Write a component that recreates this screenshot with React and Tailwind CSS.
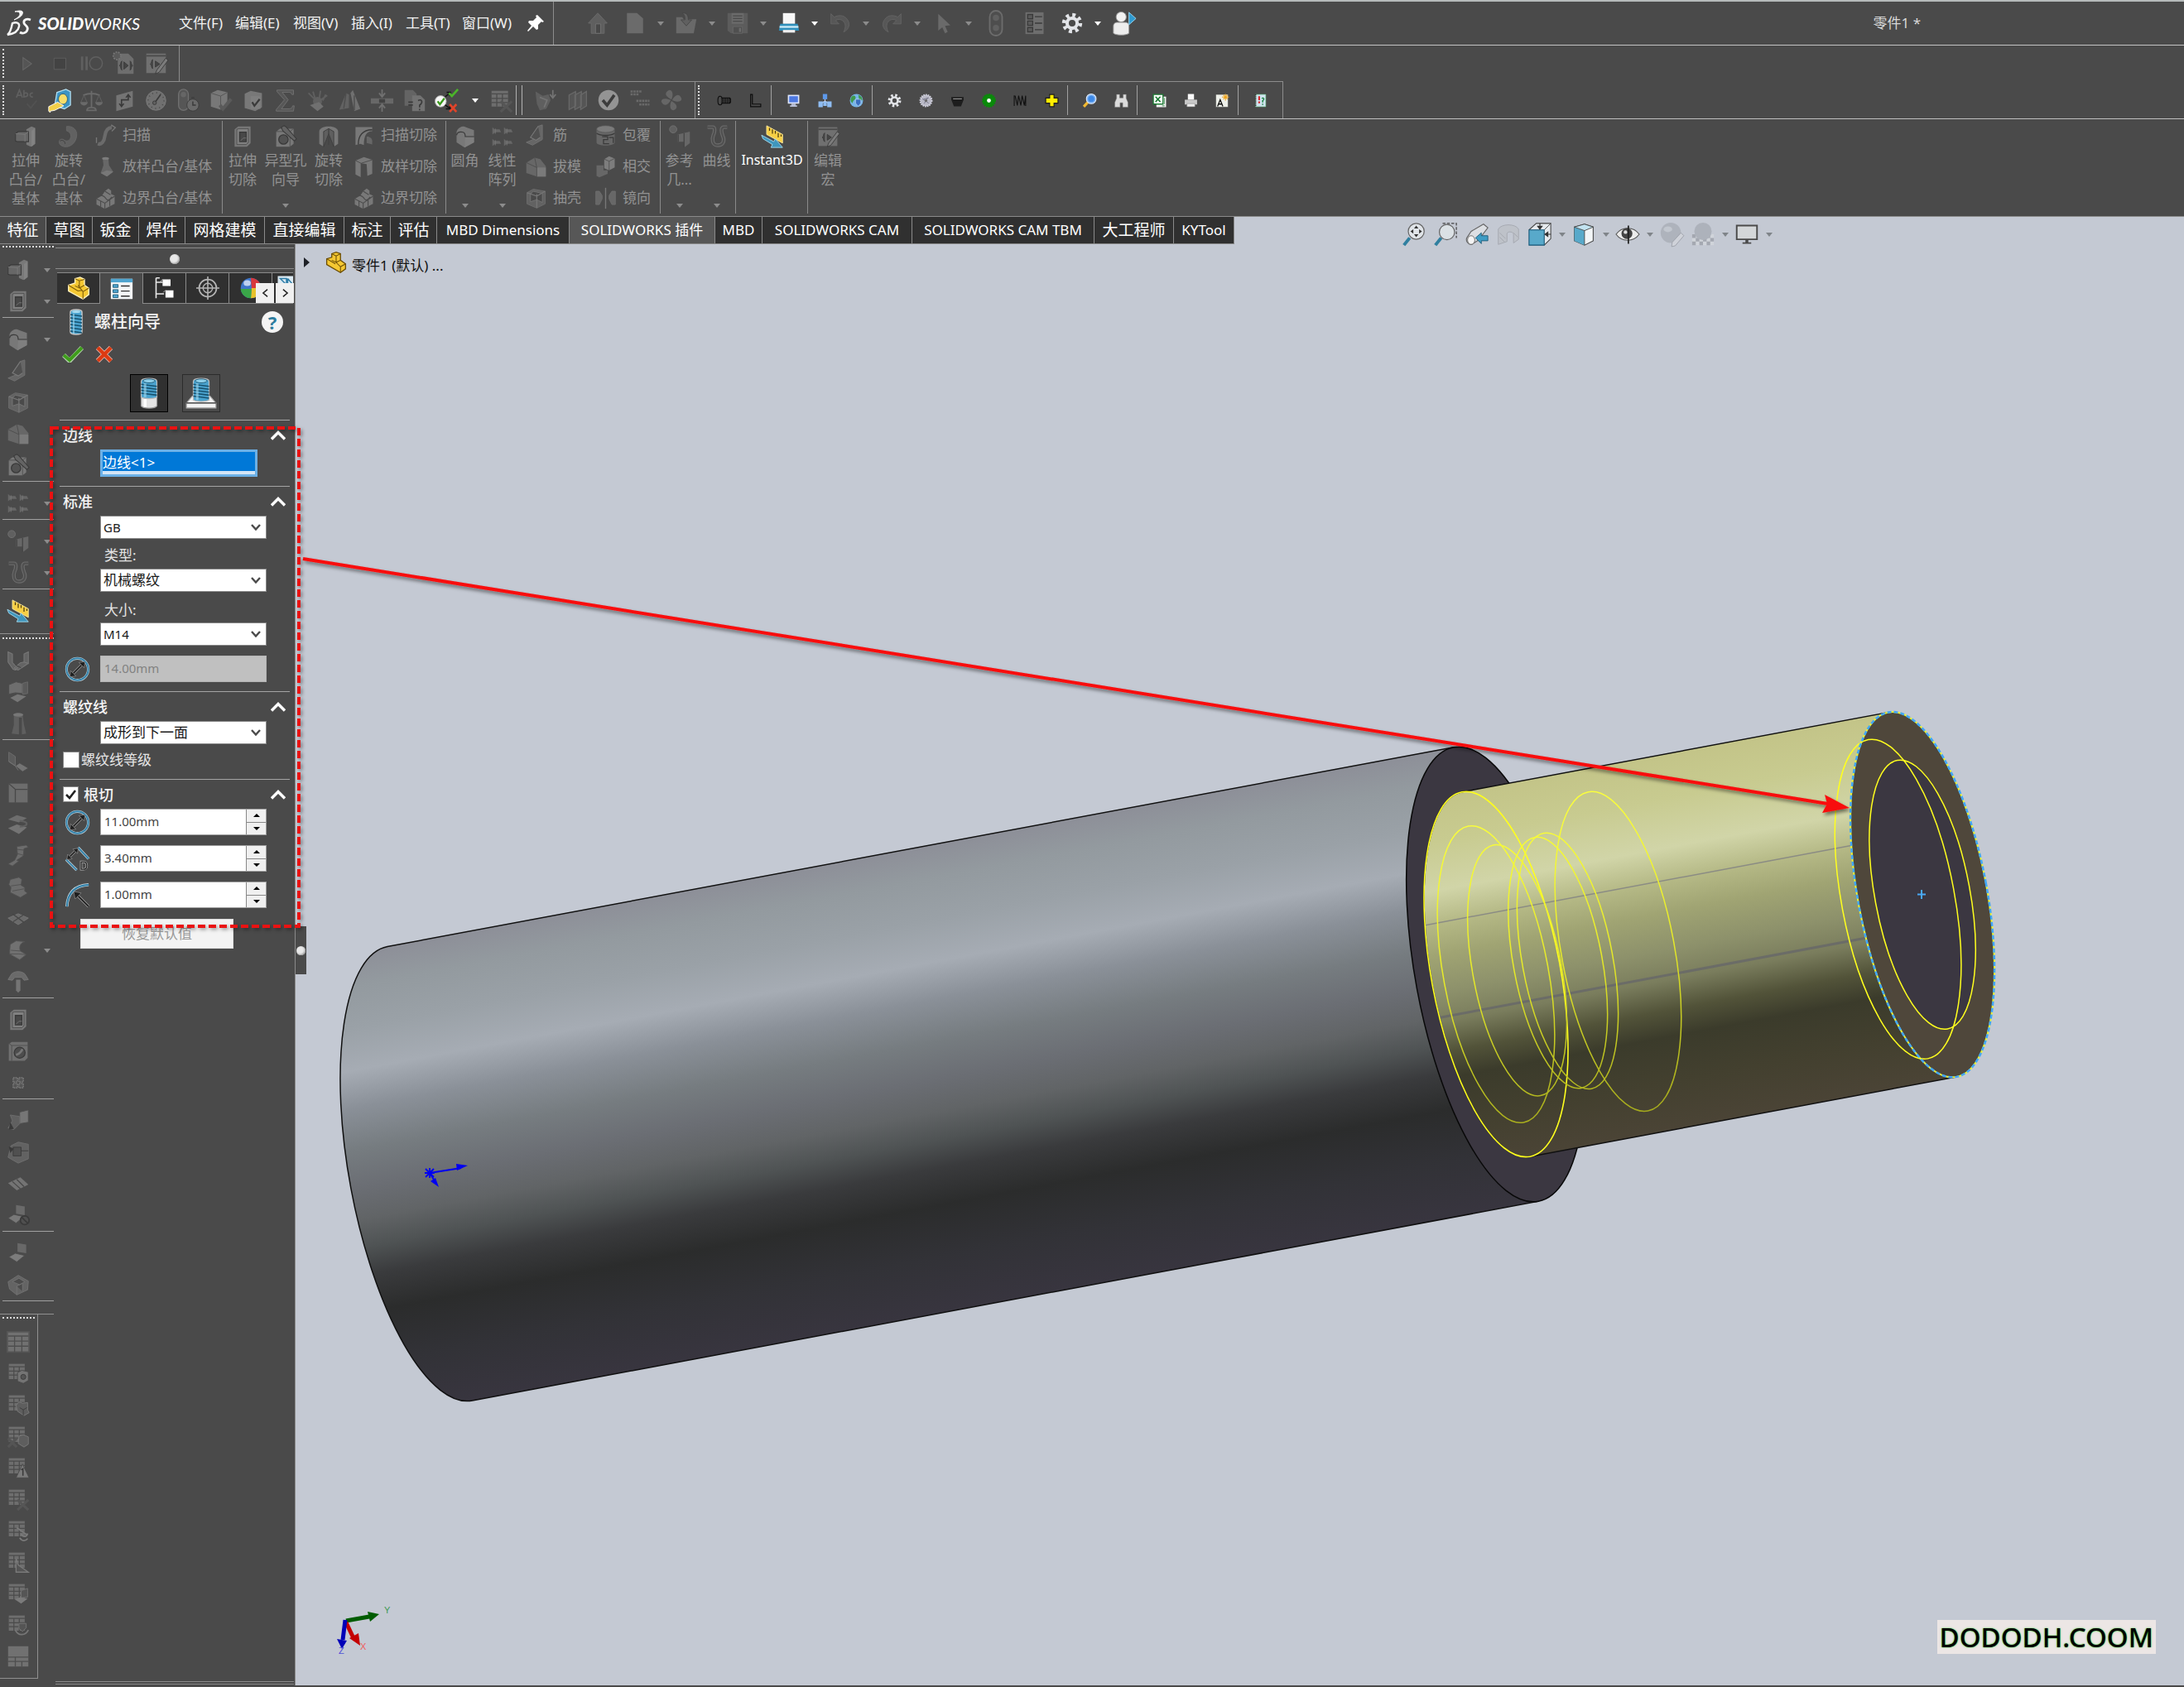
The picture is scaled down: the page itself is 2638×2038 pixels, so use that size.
import React from "react";

const UI = "font-[family-name:'Noto_Sans','Noto_Sans_CJK_SC',sans-serif]";

/* ---------- shared icon drawings, all on a 32 x 32 grid ---------- */

const L = "#787878";
const M = "#676767";
const D = "#3a3a3a";

const miniTable = (
  <>
    <path d="M3 3H25V24H3Z" fill="#6e6e6e" />
    <path d="M3 7H25M3 13H25M3 18.5H25M10 7V24M17.5 7V24" stroke="#4b4b4b" strokeWidth="1.4" fill="none" />
  </>
);

const ICONS = {
  extrude: (
    <>
      <path d="M17 6l7-4 5 2v22l-6 4-6-3z" fill={L} />
      <path d="M24 8v22l5-4V4z" fill="#828282" />
      <path d="M2 12l4-3h14v14H5l-3-1z" fill={M} stroke={D} strokeWidth="1.2" />
      <path d="M2 12l13 1v10M15 13l5-4" fill="none" stroke="#7a7a7a" />
    </>
  ),
  revolve: (
    <>
      <path d="M13 2c9-1 15 5 14 13-1 9-8 16-17 15-5-1-8-4-7-8 1-3 5-3 7-1 5 3 9-1 9-6 0-4-3-6-6-7z" fill="#616161" stroke="#696969" />
      <path d="M4 22c3-2 7 0 7 4" stroke={D} fill="none" />
    </>
  ),
  sweep: (
    <>
      <path d="M5 28c5 2 9-3 10-11 1-7 4-12 10-12" fill="none" stroke="#6b6b6b" strokeWidth="5" />
      <path d="M3 19v8M24 1l6 4-5 5" fill="none" stroke="#787878" strokeWidth="1.6" />
    </>
  ),
  loft: (
    <>
      <path d="M12 4h8l1 10 6 9-9 7-9-5 4-11z" fill={M} />
      <ellipse cx="16" cy="4" rx="5" ry="2" fill="#7c7c7c" />
      <path d="M9 25l9-4 9 2-9 7z" fill={L} />
    </>
  ),
  boundary: (
    <>
      <path d="M3 17l8-5 4-6 5-4 4 3v5l5 2v12l-14 7-12-6z" fill={L} />
      <path d="M3 17l12 6 14-10M15 23v8M9 12c4 0 6 2 8 5s5 1 8-3M15 6l8 5M9 20v8M22 18v9" fill="none" stroke="#4c4c4c" strokeWidth="1.3" />
    </>
  ),
  cut: (
    <>
      <path d="M5 6l5-4h17v23l-5 5H5z" fill={L} />
      <path d="M8 6l3-1h13v19l-3 3H8z" fill="#808080" stroke="#4c4c4c" />
      <path d="M12 10h9v13h-9z" fill="#484848" stroke={D} strokeWidth="1.6" />
      <path d="M13 22l4-4h4" stroke="#777" fill="none" />
    </>
  ),
  hole: (
    <>
      <path d="M3 9l5-4h19v21l-5 4H3z" fill={L} />
      <path d="M3 9h19v21M22 9l5-4" stroke="#4e4e4e" fill="none" />
      <circle cx="13" cy="20" r="6.500" fill="#525252" stroke={D} strokeWidth="1.500" />
      <path d="M10 3l4-2 3 2 14 16-3 3L12 8z" fill="#646464" stroke={D} strokeWidth="1.200" />
    </>
  ),
  plainHole: (
    <>
      <path d="M3 6l4-3h22v22l-4 4H3z" fill="#707070" />
      <path d="M7 8h22M7 8v21M3 5l4 3" stroke="#4e4e4e" fill="none" />
      <circle cx="18" cy="18" r="7.500" fill="#4d4d4d" stroke={D} strokeWidth="1.500" />
      <path d="M13 21c4-1 7-4 9-8" stroke="#777" strokeWidth="3" fill="none" />
    </>
  ),
  revCut: (
    <>
      <path d="M3 9c0-4 5-7 13-7s13 3 13 7v17l-6 4-7-18-7 18-6-4z" fill={L} />
      <path d="M16 5l-7 4v21l7-18 7 18V9z" fill="#5f5f5f" stroke={D} />
      <path d="M16 5v22" stroke="#444" strokeWidth="1.600" />
    </>
  ),
  sweepCut: (
    <>
      <path d="M4 4h24v6c-8 0-12 6-12 20l-5-2-7 2z" fill={L} />
      <path d="M8 29C8 17 14 8 28 8" fill="none" stroke={D} strokeWidth="1.600" />
      <path d="M20 18c3-1 8 2 8 6v5l-8-2z" fill={M} />
    </>
  ),
  loftCut: (
    <>
      <path d="M4 7l12-5 12 4v20l-7 3-1-17-8-1v20l-8-4z" fill={L} />
      <path d="M12 11v20M4 7l8 4 16-5" fill="none" stroke="#474747" />
    </>
  ),
  fillet: (
    <>
      <path d="M4 9c2-5 6-7 10-7l14 5v17l-13 7-11-7z" fill={L} />
      <path d="M4 14c1-4 4-5 9-4 3 1 3 4 3 6h12" fill="none" stroke={D} strokeWidth="1.400" />
      <path d="M16 17h12v7l-13 7z" fill="#7f7f7f" />
    </>
  ),
  pattern: (
    <>
      {[[2, 3], [18, 3], [2, 19], [18, 19]].map(([x, y]) => (
        <g key={x + "-" + y}>
          <path d={`M${x} ${y}v10l4-3h8l-2-4h-7z`} fill={M} />
          <path d={`M${x + 4} ${y + 2}v7`} stroke="#7a7a7a" />
        </g>
      ))}
    </>
  ),
  rib: (
    <>
      <path d="M19 3l6-2v21l-14 8-9-4 12-5 5-3z" fill="#666" stroke="#747474" />
      <path d="M19 3L8 19l8 4 6-4" fill="#505050" stroke="#7a7a7a" strokeWidth="1.300" />
    </>
  ),
  draft: (
    <>
      <path d="M2 10L14 3l8 2 8 10v15H17L2 25z" fill={M} />
      <path d="M17 17h13v13H17z" fill="#7a7a7a" />
      <path d="M2 10l15 7v13M17 17L14 3" stroke="#4b4b4b" fill="none" />
    </>
  ),
  shell: (
    <>
      <path d="M3 8l9-5 17 3v18l-12 6-14-6z" fill="#626262" stroke="#6e6e6e" />
      <path d="M8 10l4-4 13 3v13l-8-4-9 3z" fill="#4a4a4a" stroke="#777" />
      <path d="M3 8l14 5v17M17 13l12-7M17 18v-8" fill="none" stroke="#777" strokeWidth="1.400" />
    </>
  ),
  wrap: (
    <>
      <path d="M3 7v19c0 6 26 6 26 0V7z" fill={M} />
      <ellipse cx="16" cy="7" rx="13" ry="5" fill="#7b7b7b" stroke="#545454" />
      <path d="M3 13c6 4 20 4 26 0M11 18h8v4h-6v6h8M21 19h6v8" fill="none" stroke={D} strokeWidth="1.500" />
    </>
  ),
  intersect: (
    <>
      <path d="M14 5l7-4 8 3v13l-8 4-7-3z" fill="#7d7d7d" />
      <path d="M21 8v13M14 5l7 3 8-4" stroke="#4f4f4f" fill="none" />
      <path d="M3 14h10v7h6v5l-12 5-4-2z" fill={M} />
    </>
  ),
  mirror: (
    <>
      <path d="M2 6h5l4 6v5l-4 8H2zM30 6h-5l-4 6v5l4 8h5z" fill={M} stroke="#707070" />
      <path d="M16 1v30" stroke={L} strokeWidth="1.600" />
    </>
  ),
  refGeo: (
    <>
      <circle cx="7" cy="6" r="5" fill="#606060" stroke="#727272" />
      <path d="M13 13l17-4v16l-8 6v-8h-9z" fill="#676767" />
      <path d="M22 11v20M14 13v10" stroke="#464646" strokeWidth="1.500" />
    </>
  ),
  curve: (
    <>
      <path d="M3 3h7c4 0 3 7 1 11-2 5-2 14 6 14s10-7 7-13c-2-5-3-11 1-12h5" fill="none" stroke="#6c6c6c" strokeWidth="5" />
      <path d="M3 3h7c4 0 3 7 1 11-2 5-2 14 6 14s10-7 7-13c-2-5-3-11 1-12h5" fill="none" stroke="#505050" strokeWidth="2.400" />
    </>
  ),
  instant: (
    <>
      <path d="M8 1l22 12v12L8 13z" fill="#f7cf45" stroke="#fbe9a0" />
      <path d="M12 4v4M16 6v6M20 8v4M24 11v6M28 13v3" stroke="#4a3a10" strokeWidth="1.400" />
      <path d="M1 14l17 9 2-4 10 12-16 0 2-4L3 19z" fill="#3f96bd" stroke="#a8dcee" />
    </>
  ),
  macroEdit: (
    <>
      <path d="M3 3h26v26H3z" fill="#707070" />
      <path d="M3 6h26" stroke="#4a4a4a" strokeWidth="2" />
      <path d="M12 11c-3 0-1 5-4 6 3 1 1 6 4 6M15 13l6 4-6 4z" fill="#444" stroke={D} />
      <path d="M29 9l3 3-12 16-5 2 2-5z" fill="#7c7c7c" stroke={D} />
    </>
  ),
  macroNew: (
    <>
      <path d="M8 3h14l7 7v20H8z" fill="#6e6e6e" />
      <circle cx="7" cy="6" r="5" fill="#5a5a5a" stroke="#777" strokeWidth="2" strokeDasharray="2 1.500" />
      <path d="M14 13c-3 0-1 5-4 6 3 1 1 6 4 6M24 13c3 0 1 5 4 6-3 1-1 6-4 6M16 14l6 5-6 5z" fill="#444" stroke={D} />
    </>
  ),
  play: <path d="M9 6v20l14-10z" fill="#555" stroke="#666" strokeWidth="1.400" />,
  stop: <path d="M7 7h19v18H7z" fill="#434343" stroke="#646464" />,
  pause: (
    <>
      <path d="M2 7h3v18H2zM8 7h3v18H8z" fill="#606060" />
      <circle cx="22" cy="16" r="8.500" fill="none" stroke="#606060" strokeWidth="1.600" />
    </>
  ),
  abc: (
    <>
      <path d="M2 12L6 2l4 10M3.500 9h5M12 2v10M12 8c0-3 5-3 5 0s-5 4-5 1M24 6c-5-1-5 6 0 5" fill="none" stroke="#606060" strokeWidth="1.800" />
      <path d="M16 20l5 6 8-10" fill="none" stroke="#525252" strokeWidth="2" />
    </>
  ),
  tape: (
    <>
      <path d="M13 5l12-4 6 3v18l-8 5-13-4z" fill="#3c94c4" stroke="#b4e0f2" strokeWidth="1.400" />
      <ellipse cx="21" cy="14" rx="6" ry="7" fill="#f7de6a" stroke="#2b5d78" />
      <path d="M2 30v-6l12-6 8 5-12 6-6 1v2z" fill="#f2cf49" stroke="#fff" />
    </>
  ),
  scale: (
    <>
      <path d="M16 3v22M5 9c7-3 15-3 22 0M10 29c0-5 12-5 12 0z" fill="none" stroke="#6a6a6a" strokeWidth="2" />
      <path d="M1 18h10c0 6-10 6-10 0zM21 18h10c0 6-10 6-10 0z" fill="#6a6a6a" />
      <path d="M6 9L2 18M6 9l4 9M26 9l-4 9M26 9l4 9" stroke="#626262" />
    </>
  ),
  planeArrows: (
    <>
      <path d="M6 9l22-6v21L6 30z" fill="#747474" />
      <path d="M13 23v-8h9V9M10 20l3 4 3-4M19 12l3-4 3 4" fill="none" stroke={D} strokeWidth="1.800" />
    </>
  ),
  dial: (
    <>
      <circle cx="16" cy="16" r="13" fill="#707070" stroke="#7a7a7a" />
      <circle cx="16" cy="16" r="10.500" fill="none" stroke="#484848" strokeWidth="2" strokeDasharray="1 4.500" />
      <path d="M15 18l7-10" stroke={D} strokeWidth="1.800" />
      <circle cx="14" cy="19" r="2.500" fill="#606060" stroke={D} />
    </>
  ),
  lightTimer: (
    <>
      <rect x="3" y="1" width="13" height="28" rx="6.500" fill="#565656" stroke="#707070" strokeWidth="1.500" />
      <circle cx="9.500" cy="8" r="3.500" fill="#666" />
      <circle cx="22" cy="22" r="8" fill="#6a6a6a" stroke={D} />
      <path d="M22 17v5h4M20 12h4" stroke={D} strokeWidth="1.600" fill="none" />
    </>
  ),
  boxTick: (
    <>
      <path d="M3 6l9-4 13 3v17l-9 6-13-4z" fill={L} />
      <path d="M3 6l13 4v18M16 10l9-5" stroke="#545454" fill="none" />
      <path d="M15 22l4 5 11-13" stroke="#5a5a5a" strokeWidth="4.500" fill="none" />
    </>
  ),
  boxCheck: (
    <>
      <path d="M5 7l8-4 15 3v19l-9 5-14-4z" fill={L} />
      <path d="M13 10h13v17H13z" fill="#7f7f7f" />
      <path d="M15 18l3 5 7-9" stroke={D} strokeWidth="2.500" fill="none" />
    </>
  ),
  sigma: <path d="M5 2h22v6h-2c-1-3-2-3-5-3H12l8 10-9 12h10c3 0 4-1 5-4h2l-1 7H4v-2l11-13L5 4z" fill="#575757" stroke="#727272" />,
  turbine: (
    <>
      <path d="M4 6l12 12 13-9M10 4l3 10M20 3l-2 13M27 8l-4 8" stroke="#606060" strokeWidth="2" fill="none" />
      <circle cx="16" cy="17" r="6" fill="#606060" />
      <path d="M6 22l10 8 8-6-6-6z" fill="#707070" />
    </>
  ),
  cones: (
    <>
      <path d="M2 28L11 6l4 2v18z" fill="#626262" />
      <path d="M17 6l3-4 10 25-8 3z" fill="#707070" />
      <path d="M16 10v18M11 6L8 26M22 9v20" stroke="#4d4d4d" strokeWidth="1.500" />
    </>
  ),
  squeeze: (
    <>
      <path d="M1 13h30v7H1z" fill="#686868" />
      <path d="M16 1v9M12 6l4 5 4-5M16 31v-9M12 26l4-5 4 5" stroke="#707070" strokeWidth="2" fill="none" />
      <path d="M12 14h8v5h-8z" fill="#424242" />
    </>
  ),
  docCompare: (
    <>
      <path d="M3 2h11l5 5v16H3z" fill="#646464" />
      <path d="M13 9h11l6 6v15H13z" fill="#727272" />
      <path d="M8 18h6M8 22h6M21 16c5-3 7 3 2 6v3M23 27v2" stroke={D} strokeWidth="1.800" fill="none" />
    </>
  ),
  decision: (
    <>
      <circle cx="8" cy="17" r="7.500" fill="#f6f6f6" stroke="#aaa" />
      <path d="M4 17l3 4 6-8" stroke="#3a9a1c" strokeWidth="2.600" fill="none" />
      <path d="M14 11l6-5M14 22l6 4M16 5l5 0-1 5M15 27l6 0-1-5" stroke="#111" strokeWidth="1.600" fill="none" />
      <path d="M19 6l4 4 8-9" stroke="#4bb42a" strokeWidth="3" fill="none" />
      <path d="M20 21l9 10M29 21l-9 10" stroke="#e0442a" strokeWidth="3" />
    </>
  ),
  tableX: (
    <>
      {miniTable}
      <path d="M15 17l15 14M30 17L15 31" stroke="#565656" strokeWidth="3.500" />
    </>
  ),
  gearArrow: (
    <>
      <path d="M2 4l10 6 8-2 3 8-6 12-9 2-4-9z" fill="#5f5f5f" />
      <path d="M8 12l10 4-4 10M26 2v9M22 8l4 5 4-5" stroke="#747474" strokeWidth="2" fill="none" />
    </>
  ),
  sheets: (
    <path d="M5 9l9-5v20l-9 5zM13 9l9-5v20l-9 5zM21 9l8-5v20l-8 5z" fill="#555" stroke="#686868" strokeWidth="1.500" />
  ),
  roundCheck: (
    <>
      <circle cx="16" cy="16" r="14" fill="#949494" />
      <path d="M8 16l6 7 10-14" stroke="#3c3c3c" strokeWidth="4" fill="none" />
    </>
  ),
  drive: (
    <path d="M3 4h16M3 8h12M11 17h18M15 22h14" stroke="#6a6a6a" strokeWidth="3" strokeDasharray="3 1" />
  ),
  fan: (
    <path d="M16 15C8 11 5 6 13 2c5 0 6 7 3 13zM17 16c4-8 10-10 13-2 0 5-7 5-13 2zM16 17c8 4 10 10 3 13-5 0-6-7-3-13zM15 16c-4 8-10 9-13 2 0-5 7-5 13-2z" fill="#666" />
  ),
  screw: (
    <>
      <ellipse cx="7" cy="16" rx="5" ry="10" fill="none" stroke="#0c0c0c" strokeWidth="2" />
      <path d="M12 10h17l2 2v8l-2 2H12zM16 10v12M20 10v12M24 10v12M28 10v12" fill="none" stroke="#0c0c0c" strokeWidth="2" />
    </>
  ),
  angle: <path d="M5 2h4v22h19v6H5z" fill="none" stroke="#0c0c0c" strokeWidth="2.200" />,
  monitorSmall: (
    <>
      <path d="M3 3h26v20H3z" fill="#dfe6fb" />
      <path d="M6 6h20v14H6z" fill="#4d78e0" />
      <path d="M11 23h10v4H11zM8 27h16v3H8z" fill="#b8bfd6" />
    </>
  ),
  nodes: (
    <>
      <path d="M16 12v7M7 23l9-6 9 6" stroke="#d8dcea" strokeWidth="2" fill="none" />
      <path d="M11 1h10v12H11z" fill="#5d99ea" />
      <path d="M1 18h10v13H1zM21 18h10v13H21zM12 18h8v10h-8z" fill="#8fbdf3" />
    </>
  ),
  globe: (
    <>
      <circle cx="16" cy="16" r="15" fill="#77b5e8" />
      <path d="M6 6c6-4 9 1 8 5s-6 4-7 11C1 17 2 11 6 6zM20 3c7 2 10 8 9 13l-7-3z" fill="#3f9a4d" />
      <path d="M14 13h12v9l-6 7-6-7z" fill="#3a6fc0" stroke="#dfe9f8" />
    </>
  ),
  gearWhite: (
    <>
      <circle cx="16" cy="16" r="12" fill="none" stroke="#e2e4e8" strokeWidth="6" strokeDasharray="4.700 4.700" />
      <circle cx="16" cy="16" r="7.500" fill="none" stroke="#e2e4e8" strokeWidth="5" />
    </>
  ),
  gearRough: (
    <>
      <circle cx="16" cy="16" r="13" fill="#b9b9c6" stroke="#cfcfdc" strokeWidth="4" strokeDasharray="3 2" />
      <path d="M8 12l14 10M12 23l8-14M22 10l-12 3" stroke="#77778a" strokeWidth="1.800" />
      <circle cx="16" cy="16" r="3" fill="#666" />
    </>
  ),
  pulley: (
    <>
      <path d="M2 8h28v6l-6 15H8L2 14z" fill="#1d1d1d" />
      <path d="M6 12h20" stroke="#aaa" strokeWidth="1.800" />
    </>
  ),
  greenGear: (
    <>
      <circle cx="16" cy="16" r="14" fill="#0a8a0a" stroke="#0a8a0a" strokeWidth="4" strokeDasharray="3 2" />
      <circle cx="16" cy="16" r="4.500" fill="#fff" />
    </>
  ),
  spring: <path d="M2 28V4M4 5l5 22L12 5l5 22L20 5l5 22L28 5v23" fill="none" stroke="#101010" strokeWidth="2" />,
  valve: <path d="M11 2h10v8h9v12h-9v8H11v-8H2V10h9z" fill="#ffee00" stroke="#1a1a1a" strokeWidth="2.200" />,
  lens: (
    <>
      <path d="M2 30l9-10" stroke="#f0b832" strokeWidth="6" />
      <circle cx="19" cy="12" r="11" fill="#7fb4f5" stroke="#e4eefc" strokeWidth="2" />
      <circle cx="19" cy="12" r="7" fill="#3e8ae8" />
    </>
  ),
  binocular: <path d="M5 2h7v8h8V2h7v9l4 9v11H19V21h-6v10H1V20l4-9z" fill="#dcdcdc" stroke="#777" />,
  excel: (
    <>
      <path d="M9 7h22v24H9z" fill="#f4f4f4" />
      <path d="M2 2h22v22H2z" fill="#fff" stroke="#1c7a33" strokeWidth="2.500" />
      <path d="M7 7l11 12M18 7L7 19" stroke="#1c7a33" strokeWidth="3" />
      <path d="M27 10v14M22 28h6" stroke="#1c7a33" strokeWidth="1.500" />
    </>
  ),
  printerGray: (
    <>
      <path d="M9 1h14v13H9z" fill="#fafafa" />
      <path d="M2 14h28v11H2z" fill="#c9c9c9" />
      <path d="M7 23h18v7H7z" fill="#eee" stroke="#888" />
    </>
  ),
  annotate: (
    <>
      <path d="M1 2h28v29H1z" fill="#eef0ea" stroke="#444" />
      <path d="M5 29l6-15 6 15M7 24h8" stroke="#111" strokeWidth="2.500" fill="none" />
      <path d="M23 1v15M15 8h16M18 3l10 10M28 3L18 13" stroke="#f0a51e" strokeWidth="2" />
    </>
  ),
  helpBook: (
    <>
      <path d="M5 2h23v28H5z" fill="#cfe3ee" stroke="#6c8" />
      <path d="M5 2v28" stroke="#333" strokeWidth="3" strokeDasharray="2 2" />
      <path d="M13 6v9M13 18v4" stroke="#d8242a" strokeWidth="4" />
      <path d="M19 11c5-3 6 3 2 5v4M21 23v3" stroke="#11803a" strokeWidth="2.600" fill="none" />
    </>
  ),
  home: (
    <>
      <path d="M16 2l13 14h-4v14H7V16H3z" fill="#5f5f5f" stroke="#6c6c6c" />
      <path d="M13 17h7v13h-7z" fill="#484848" stroke="#737373" />
    </>
  ),
  doc: <path d="M4 1h15l9 8v22H4z" fill="#6b6b6b" />,
  folder: (
    <>
      <path d="M1 7h9l2 3h19l-4 21H1z" fill="#696969" />
      <path d="M10 1c7-1 9 4 9 10h5l-8 9-8-9h6c0-4 0-7-4-10z" fill="#606060" stroke="#444" />
    </>
  ),
  save: (
    <>
      <path d="M1 1h30v30H6l-5-4z" fill="#5c5c5c" />
      <path d="M7 1h18v16H7z" fill="#6a6a6a" />
      <path d="M9 5h14M9 9h14M9 13h14" stroke="#4a4a4a" strokeWidth="1.500" />
      <path d="M9 21h14v10H9z" fill="#505050" stroke="#6a6a6a" />
      <path d="M18 23h3v6h-3z" fill="#6c6c6c" />
    </>
  ),
  print: (
    <>
      <path d="M7 1h18v16H7z" fill="#f8f8f8" />
      <path d="M3 17h26l2 10H1z" fill="#2e8fbb" />
      <path d="M2 20h28v3H2z" fill="#c6e7f5" />
      <path d="M7 26h18v4H7z" fill="#eee" />
    </>
  ),
  undo: (
    <path d="M2 2v15h12l-5-5c6-4 12 0 14 5 1 5 0 8-2 12 9-4 10-13 5-19C21 3 12 4 7 7z" fill="#575757" stroke="#666" />
  ),
  redo: (
    <path d="M30 2v15H18l5-5c-6-4-12 0-14 5-1 5 0 8 2 12-9-4-10-13-5-19C11 3 20 4 25 7z" fill="#575757" stroke="#666" />
  ),
  cursor: <path d="M9 2v25l6-5 4 9 4-2-4-9 8-1z" fill="#6a6a6a" />,
  light: (
    <>
      <rect x="8" y="0" width="16" height="32" rx="8" fill="#4e4e4e" stroke="#6c6c6c" strokeWidth="2" />
      <circle cx="16" cy="9" r="4" fill="#606060" />
      <circle cx="16" cy="22" r="4" fill="#606060" />
    </>
  ),
  list: (
    <>
      <path d="M3 1h25v30H3z" fill="#6e6e6e" />
      <path d="M6 4h7v6H6zM6 13h7v6H6zM6 22h7v6H6zM16 7h10M16 16h10M16 25h10" fill="#5a5a5a" stroke={D} strokeWidth="1.500" />
    </>
  ),
  person: (
    <>
      <circle cx="12" cy="8" r="6.500" fill="#f2f2f2" stroke="#999" />
      <path d="M2 29V20c0-4 3-5 5-5h10c3 0 5 1 5 5v9c-4 3-16 3-20 0z" fill="#ededed" stroke="#999" />
      <path d="M22 2l9 8-9 8z" fill="#2f9ad0" stroke="#9cd4ee" />
    </>
  ),
  uClamp: (
    <>
      <path d="M2 4l6 3v12l7 7-3 3-3-1L2 18zM30 4l-6 3v11l6 2zM24 18l6 2-14 9-4-1-1-2 8-7z" fill="#646464" stroke="#787878" strokeWidth="1.200" />
      <path d="M12 22l8 4" stroke={D} />
    </>
  ),
  bendBox: (
    <>
      <path d="M3 6l10-4 9 2v14l-10-1-9 2z" fill="#6e6e6e" stroke="#4c4c4c" />
      <path d="M22 4l7-2v16l-7 1z" fill="#5a5a5a" stroke="#6b6b6b" />
      <path d="M5 24l10-5 12 3-12 8z" fill="#767676" />
    </>
  ),
  column: (
    <>
      <path d="M10 4h12l2 14 3 12-6 1V8h-4v23l-10-1 3-12z" fill="#5f5f5f" />
      <ellipse cx="16" cy="4" rx="7" ry="2.500" fill="#777" />
    </>
  ),
  flangeL: (
    <>
      <path d="M3 3l9 6v13l-9-6z" fill="#5c5c5c" stroke="#6f6f6f" />
      <path d="M12 22l6-4 12 7-8 5z" fill="#747474" stroke="#4c4c4c" />
      <path d="M3 16l9 6 4 6" stroke="#777" fill="none" />
    </>
  ),
  corner: (
    <>
      <path d="M3 3h26v26H3z" fill="#6c6c6c" />
      <path d="M3 3l9 8v18M12 11h17" stroke="#484848" strokeWidth="1.500" fill="none" />
    </>
  ),
  sandwich: (
    <>
      <path d="M2 9l12-6 14 4-11 6z" fill="#6e6e6e" />
      <path d="M2 21l12-5 14 4-11 9z" fill="#747474" />
      <path d="M18 11c14 1 12 8 0 8" fill="none" stroke="#606060" strokeWidth="2.500" />
    </>
  ),
  zBend: (
    <path d="M14 3l13-2 3 3-6 2-1 10-9 6 3 1-9 7-6-3 9-5 4-8zM12 12l11 3M14 7l10 1" fill="#6c6c6c" stroke="#4f4f4f" />
  ),
  steps: (
    <path d="M5 5l12-3 4 3-1 8 5 3v5l4 3-10 6-14-7 1-7-3-4zM6 14l14-2M8 21l16-3" fill="#6c6c6c" stroke="#4f4f4f" />
  ),
  crossPlane: (
    <>
      <path d="M2 15l14-6 14 6-14 9z" fill="#6a6a6a" stroke="#777" />
      <path d="M8 9l16 12M24 10L9 20" stroke="#484848" strokeWidth="1.500" />
    </>
  ),
  curlPlate: (
    <>
      <path d="M5 8l8-5 12 1c-7 2-8 8-6 13l8 5-9 7-14-8z" fill="#717171" stroke="#555" />
      <path d="M6 16l13 1M4 21l13 0 10 1" stroke="#505050" fill="none" />
    </>
  ),
  hammer: (
    <>
      <path d="M2 13l5-8c5-4 13-4 18 0l5 8-6 1-3-4H11l-3 4z" fill="#6a6a6a" stroke="#777" />
      <path d="M13 13h6v15l-3 3-3-3z" fill="#747474" />
    </>
  ),
  fourGrid: (
    <path d="M9 9h6v6H9zM17 9h6v6h-6zM9 17h6v6H9zM17 17h6v6h-6z" fill="#555" stroke="#808080" strokeWidth="1.500" strokeDasharray="2 1" />
  ),
  unfold: (
    <>
      <path d="M18 4l12-3v17l-12 2z" fill="#767676" stroke="#4e4e4e" />
      <path d="M5 8l13 2v10l-8 8-8-2 6-10z" fill="#606060" stroke="#6e6e6e" />
      <path d="M3 28l2-10 5 9z" fill={D} />
    </>
  ),
  refold: (
    <>
      <path d="M16 2l14 3v20l-14 6L2 23l4-16z" fill="#626262" stroke="#707070" />
      <path d="M9 9h11v12H9zM20 14h10" stroke={D} fill="#505050" />
      <path d="M3 8l7 3-5 6z" fill={D} />
    </>
  ),
  flat: (
    <>
      <path d="M2 15l17-8 11 10-16 8z" fill="#747474" />
      <path d="M8 13l11 10M14 10l10 10" stroke="#484848" strokeWidth="1.500" />
    </>
  ),
  noBend: (
    <>
      <path d="M13 2l12 2v12l-12-2z" fill="#6a6a6a" />
      <path d="M2 20l8-5 14 3-11 9z" fill="#787878" stroke="#4c4c4c" />
      <circle cx="25" cy="23" r="6" fill="#505050" stroke={D} strokeWidth="2" />
      <path d="M21 19l8 8" stroke={D} strokeWidth="2" />
    </>
  ),
  plates: (
    <>
      <path d="M15 2l12 2v12l-12-2z" fill="#686868" />
      <path d="M3 21l9-5 13 3-11 9z" fill="#7c7c7c" stroke="#4c4c4c" />
    </>
  ),
  openBox: (
    <>
      <path d="M2 12L16 3l14 8-1 12-15 7L4 22z" fill="#646464" stroke="#747474" />
      <path d="M8 12l9-5 8 5-7 4zM14 18v12M14 18l8-4v11" fill="#4c4c4c" stroke="#747474" />
    </>
  ),
  tableBig: (
    <>
      <path d="M1 2h30v28H1z" fill="#717171" stroke="#555" strokeWidth="2" />
      <path d="M2 8h28M2 15h28M2 22h28M11 8v22M21 8v22" stroke="#4e4e4e" strokeWidth="1.500" />
    </>
  ),
  tableHole: (
    <>
      {miniTable}
      <path d="M15 15l6-3 9 2v12l-7 4-8-3z" fill="#747474" stroke="#484848" />
      <circle cx="23" cy="21" r="3.500" fill="#555" stroke={D} />
    </>
  ),
  tableBom: (
    <>
      {miniTable}
      <path d="M13 17l4-5 5 2 7-1v10l2 4-7 4-9-6z" fill="#5e5e5e" stroke="#7a7a7a" />
      <path d="M18 20l5 3 5-3M23 23v8" stroke={D} fill="none" />
    </>
  ),
  tableBomX: (
    <>
      {miniTable}
      <path d="M2 19l12 12M14 19L2 31" stroke="#555" strokeWidth="3.500" />
      <path d="M17 16l6-2 7 3v10l-6 4-8-5z" fill="#5e5e5e" stroke="#7a7a7a" />
    </>
  ),
  tableRev: (
    <>
      {miniTable}
      <path d="M22 11l9 19H13z" fill="#7b7b7b" stroke="#4a4a4a" />
      <path d="M20 19l2.500-1.500V27" stroke={D} strokeWidth="1.800" fill="none" />
    </>
  ),
  tableWeld: (
    <>
      {miniTable}
      <path d="M14 12l14 10M20 20c2 6 8 5 9 0M18 26c4 6 9 4 11 1" stroke="#7a7a7a" strokeWidth="2" fill="none" />
    </>
  ),
  tableBend: (
    <>
      {miniTable}
      <path d="M13 11v19h17L16 20z" fill="#555" stroke="#7a7a7a" strokeWidth="1.500" />
    </>
  ),
  tableSheet: (
    <>
      {miniTable}
      <path d="M20 12l9-3v12l-9 1z" fill="#555" stroke="#747474" />
      <path d="M11 24l8-3 10 2-9 7z" fill="#7b7b7b" />
    </>
  ),
  tablePunch: (
    <>
      {miniTable}
      <path d="M17 14h10v6l-5 5-5-4z" fill="#555" stroke="#777" />
      <path d="M12 23c4 9 14 8 18 0" stroke="#777" strokeWidth="2" fill="none" />
    </>
  ),
  tableTitle: (
    <>
      <path d="M2 2h28v28H2z" fill="#717171" />
      <path d="M2 17h28M2 23h28M12 17v13M21 23v7" stroke="#4e4e4e" strokeWidth="1.500" />
    </>
  ),
  part: (
    <>
      <path d="M11 3l7-2 6 3v8l6 4v9l-8 6L2 20v-8l9-3z" fill="#f5c832" stroke="#fff1bd" strokeWidth="1.600" />
      <path d="M11 3l6 3 7-2M17 6v10l-6-3M17 16l7-4M2 12l13 8 6-1M22 21v10M22 21l8-5M15 12l7 9" stroke="#7a5a08" strokeWidth="1.200" fill="none" />
    </>
  ),
  partDark: (
    <>
      <path d="M10 4l6-2 6 2v9l7 5v7l-7 5L3 19v-8l7-2z" fill="#f5c832" stroke="#6b4d05" strokeWidth="1.500" />
      <path d="M10 4l6 3 6-3M16 7v9l-6-3M16 16l6-3M3 11l12 7M22 22v8M22 22l7-4M16 16l6 6" stroke="#6b4d05" strokeWidth="1.200" fill="none" />
    </>
  ),
  propList: (
    <>
      <path d="M1 2h30v28H1z" fill="#f3f6f8" />
      <path d="M1 2h30v5H1z" fill="#4fa4cf" />
      <path d="M4 10h7v4H4zM4 17h7v4H4zM4 24h7v4H4z" fill="#4fa4cf" stroke="#1c5875" />
      <path d="M15 12h12M15 19h12M15 26h12" stroke="#333" strokeWidth="1.500" />
    </>
  ),
  configs: (
    <>
      <path d="M4 2v28M4 8h9M4 24h11M4 2h5" stroke="#e8e8e8" strokeWidth="1.800" fill="none" />
      <path d="M13 4h11v9H13zM17 19h11v10H17z" fill="#fff" />
      <path d="M10 7l3-3M14 22l3-3" stroke="#ccc" />
    </>
  ),
  target: (
    <>
      <circle cx="16" cy="16" r="12" fill="none" stroke="#b5b5b5" strokeWidth="2" />
      <circle cx="16" cy="16" r="6.500" fill="none" stroke="#b5b5b5" strokeWidth="1.600" />
      <path d="M16 0v32M0 16h32" stroke="#b5b5b5" strokeWidth="1.800" />
    </>
  ),
  ball: (
    <>
      <circle cx="16" cy="16" r="14" fill="#3f75c8" />
      <path d="M16 2a14 14 0 0 1 14 14H17z" fill="#d8383c" />
      <path d="M30 16a14 14 0 0 1-14 14l1-14z" fill="#e8c22c" />
      <path d="M2 17a14 14 0 0 0 14 13l1-13z" fill="#3aa648" />
      <ellipse cx="11" cy="9" rx="5" ry="4" fill="#dfe9fa" opacity=".8" />
    </>
  ),
  camTab: (
    <>
      <path d="M2 2h30v28H2z" fill="#dceaf2" />
      <path d="M6 6l10 10V6zM18 6l12 14M18 6v14h12" stroke="#2f7ea8" strokeWidth="2" fill="none" />
    </>
  ),
  stud: (
    <>
      <path d="M9 4c0-4 14-4 14 0v24c0 4-14 4-14 0z" fill="#4aa3cf" stroke="#c6c6c6" strokeWidth="1.500" />
      <path d="M9 7l14 2M9 11l14 2M9 15l14 2M9 19l14 2M9 23l14 2M9 27l14 2" stroke="#17526f" strokeWidth="1.500" fill="none" />
      <path d="M13 6v24" stroke="#a6dcf2" strokeWidth="2" opacity=".6" />
      <ellipse cx="16" cy="3.500" rx="5" ry="1.600" fill="#aadcf0" />
    </>
  ),
  studShaft: (
    <>
      <path d="M8 20h16v9c-2 3-14 3-16 0z" fill="#e4e4e4" stroke="#9a9a9a" />
      <path d="M8 4c0-4 16-4 16 0v16c-3 2-13 2-16 0z" fill="#4aa3cf" stroke="#bcbcbc" />
      <path d="M8 7l16 2M8 10l16 2M8 13l16 2M8 16l16 2" stroke="#17526f" strokeWidth="1.300" fill="none" />
      <path d="M12 6v14" stroke="#a6dcf2" strokeWidth="2.500" opacity=".6" />
      <path d="M12 22v8" stroke="#fff" strokeWidth="3" />
      <ellipse cx="16" cy="3.500" rx="6" ry="2" fill="#8fd0ea" stroke="#17526f" strokeWidth=".7" />
    </>
  ),
  studPlate: (
    <>
      <path d="M7 19h18l6 7v5H1v-5z" fill="#f1f1f1" stroke="#aaa" />
      <path d="M1 26h30" stroke="#222" strokeWidth="1.200" />
      <path d="M8 4c0-4 16-4 16 0v19c-3 2-13 2-16 0z" fill="#4aa3cf" stroke="#bcbcbc" />
      <path d="M8 7l16 2M8 10l16 2M8 13l16 2M8 16l16 2M8 19l16 2" stroke="#17526f" strokeWidth="1.300" fill="none" />
      <path d="M12 6v17" stroke="#a6dcf2" strokeWidth="2.500" opacity=".6" />
      <ellipse cx="16" cy="3.500" rx="6" ry="2" fill="#8fd0ea" stroke="#17526f" strokeWidth=".7" />
    </>
  ),
  diameter: (
    <>
      <circle cx="16" cy="16" r="14.500" fill="none" stroke="#c5d5dd" strokeWidth="3.400" />
      <circle cx="16" cy="16" r="14.500" fill="none" stroke="#3583ab" strokeWidth="2.200" />
      <path d="M9 23L23 9" stroke="#9a9a9a" strokeWidth="3.600" />
      <path d="M9 23L23 9" stroke="#1d1d1d" strokeWidth="1.800" />
      <path d="M6 26l1-8 7 7zM26 6l-8 1 7 7z" stroke="#9a9a9a" strokeWidth=".7" fill="#1d1d1d" />
    </>
  ),
  depth: (
    <>
      <path d="M1 17l14 14M17 1l14 15" stroke="#cfdbe0" strokeWidth="3.600" />
      <path d="M1 17l14 14M17 1l14 15" stroke="#3583ab" strokeWidth="2.200" />
      <path d="M5 14L14 5" stroke="#9a9a9a" strokeWidth="3.400" />
      <path d="M5 14L14 5" stroke="#1d1d1d" strokeWidth="1.800" />
      <path d="M2 17l1-7 6 6zM17 2l-7 1 6 6z" stroke="#9a9a9a" strokeWidth=".7" fill="#1d1d1d" />
      <path d="M21 20h3c6 0 6 10 0 10h-3z" fill="none" stroke="#b9b9b9" strokeWidth="3" />
      <path d="M21 20h3c6 0 6 10 0 10h-3z" fill="none" stroke="#222" strokeWidth="1.500" />
    </>
  ),
  radius: (
    <>
      <path d="M2 31C3 13 12 3 31 2" fill="none" stroke="#cfdbe0" strokeWidth="3.800" />
      <path d="M2 31C3 13 12 3 31 2" fill="none" stroke="#3583ab" strokeWidth="2.400" />
      <path d="M31 31L16 16" stroke="#a8a8a8" strokeWidth="3.600" />
      <path d="M31 31L15 15" stroke="#1d1d1d" strokeWidth="2" />
      <path d="M11 11l2 10 8-8z" stroke="#9a9a9a" strokeWidth=".7" fill="#1d1d1d" />
    </>
  ),
  zoomFit: (
    <>
      <path d="M2 31l8-10" stroke="#2f7f9f" strokeWidth="4.500" />
      <circle cx="19" cy="12" r="11" fill="#e0e4e8" stroke="#666" strokeWidth="1.400" />
      <path d="M19 4l3 4h-6zM19 20l3-4h-6zM11 12l4-3v6zM27 12l-4-3v6z" fill="#333" />
    </>
  ),
  zoomArea: (
    <>
      <path d="M12 1h19v20" fill="none" stroke="#444" strokeWidth="1.400" strokeDasharray="4 2" />
      <path d="M2 31l8-10" stroke="#2f7f9f" strokeWidth="4.500" />
      <circle cx="18" cy="13" r="10.500" fill="#dbe1e5" stroke="#666" strokeWidth="1.400" />
    </>
  ),
  prevView: (
    <>
      <path d="M25 2l6 5-13 17-9 6c-5 1-9-5-7-9l6-9z" fill="#dcdfe3" stroke="#666" strokeWidth="1.300" />
      <ellipse cx="8" cy="24" rx="5" ry="6" fill="#f4f4f4" stroke="#666" />
      <path d="M14 21l8-7v4h9v7h-9v4z" fill="#3f9cc4" stroke="#1d5875" />
    </>
  ),
  section: (
    <>
      <path d="M2 9c4-8 24-8 28 0v14l-7 5v-13c-2-3-8-3-9 0v11L2 30z" fill="#bec2c9" stroke="#a2a6ae" />
      <path d="M4 14l8 8M4 20l7 7M23 14l6 6" stroke="#a2a6ae" />
    </>
  ),
  orient: (
    <>
      <path d="M1 10L11 1h20v21l-9 9" fill="#e6eaee" stroke="#444" strokeWidth="1.200" />
      <path d="M22 10l9-9" stroke="#444" />
      <path d="M1 10h21v21H1z" fill="#58a9ca" stroke="#155474" strokeWidth="1.200" />
      <path d="M16 1v6M13 5l3 4 3-4zM31 16h-6M27 13l-4 3 4 3z" fill="#333" stroke="#333" strokeWidth="1.300" />
    </>
  ),
  display: (
    <>
      <path d="M3 6l14-4 12 4v19l-12 6-14-6z" fill="#f2f5f7" stroke="#444" strokeWidth="1.200" />
      <path d="M3 6l14 5v20L3 25z" fill="#58a9ca" />
      <path d="M3 6l14-4 12 4-12 5z" fill="#c2e3f0" stroke="#444" />
      <path d="M17 11v20" stroke="#444" />
    </>
  ),
  eye: (
    <>
      <path d="M0 16C8 5 24 5 32 16 24 27 8 27 0 16z" fill="#ececec" stroke="#555" strokeWidth="1.300" />
      <circle cx="15" cy="15" r="7.500" fill="#444" />
      <circle cx="13" cy="13" r="2.500" fill="#ddd" />
      <path d="M17 4v25" stroke="#222" strokeWidth="2" />
    </>
  ),
  sphereEdit: (
    <>
      <circle cx="15" cy="14" r="14" fill="#aeb3bc" />
      <ellipse cx="11" cy="9" rx="6" ry="4" fill="#c2c7cf" />
      <path d="M29 14l4 4-12 14-5 1 1-6z" fill="#cfd2d9" stroke="#9a9ea7" />
    </>
  ),
  scene: (
    <>
      <path d="M1 16h30v15H1z" fill="#d0d4da" />
      <path d="M1 16h5v5H1zM11 16h5v5h-5zM21 16h5v5h-5zM6 21h5v5H6zM16 21h5v5h-5zM26 21h5v5h-5zM1 26h5v5H1zM11 26h5v5h-5zM21 26h5v5h-5z" fill="#a4a8b1" />
      <circle cx="16" cy="12" r="12" fill="#adb2bb" />
    </>
  ),
  screen: (
    <>
      <path d="M2 4h28v19H2z" fill="#d4d7d9" stroke="#4a4a4a" strokeWidth="2.200" />
      <path d="M14 23h4v4h-4zM10 27h12v2H10z" fill="#4a4a4a" />
    </>
  ),
};

function Icon({ name, className }) {
  return (
    <svg viewBox="0 0 32 32" className={`block shrink-0 overflow-visible ${className}`} aria-hidden="true">
      {ICONS[name]}
    </svg>
  );
}

function Caret({ className = "text-[#8c8c8c]" }) {
  return (
    <svg viewBox="0 0 8 5" className={`block w-2 shrink-0 ${className}`} aria-hidden="true">
      <path d="M0 0H8L4 5Z" fill="currentColor" />
    </svg>
  );
}

function IconButton({ name, width, size = "size-7" }) {
  return (
    <button type="button" aria-label={name} className={`flex h-full shrink-0 items-center justify-center ${width}`}>
      <Icon name={name} className={size} />
    </button>
  );
}

function GripV() {
  return <span className="my-1 ml-[3px] w-0 shrink-0 self-stretch border-l-2 border-dotted border-[#dedede]" />;
}

/* ---------- title bar ---------- */

const MENUS = [
  ["文件(F)", "w-[68px]"],
  ["编辑(E)", "w-[70px]"],
  ["视图(V)", "w-[70px]"],
  ["插入(I)", "w-[66px]"],
  ["工具(T)", "w-[68px]"],
  ["窗口(W)", "w-[75px]"],
];

const QUICK = [
  ["doc"],
  ["folder"],
  ["save"],
  ["print", true],
  ["undo"],
  ["redo"],
  ["cursor"],
];

function TitleBar() {
  return (
    <header className="flex h-[55px] items-stretch border-b border-t-2 border-b-[#c4c4c4] border-t-[#b6baba] text-[#f2f2f2]">
      <div className="flex w-[208px] shrink-0 items-center pl-2">
        <svg viewBox="0 0 30 32" className="h-8 w-[30px]" aria-hidden="true">
          <path d="M10 2c7-2 11-1 9 3-1 3-5 5-10 7 5-3 7-5 7-7 0-3-3-3-6-3z" fill="#f5f5f5" stroke="#f5f5f5" strokeWidth="1" />
          <path d="M1 30c3-2 5-9 6-14 5-2 9 0 8 4-1 6-7 9-14 10z" fill="none" stroke="#f5f5f5" strokeWidth="2.400" />
          <path d="M29 12c-5-2-9 0-8 4 1 3 6 4 4 8-1 4-6 5-9 3" fill="none" stroke="#f5f5f5" strokeWidth="2.800" />
        </svg>
        <span className="ml-2 text-[20px] italic leading-6 text-white font-[family-name:Lato,sans-serif]">
          <b className="font-black">SOLID</b>WORKS
        </span>
      </div>
      <nav className="flex items-center">
        {MENUS.map(([t, w]) => (
          <button key={t} type="button" className={`whitespace-nowrap pl-2 text-left text-[17px] leading-6 ${w}`}>
            {t}
          </button>
        ))}
      </nav>
      <button type="button" aria-label="固定" className="flex w-[44px] items-center justify-center border-r border-[#8c8c8c]">
        <svg viewBox="0 0 20 20" className="size-5" aria-hidden="true">
          <path d="M12 0l8 8-2 1-1-1-4 4 0 5-2 1-4-4-6 6-1-1 5-6-4-4 1-2h5l4-4-1-2z" fill="#fff" />
        </svg>
      </button>
      <div className="ml-[35px] flex items-center">
        <IconButton name="home" width="mr-[9px] w-9" />
        {QUICK.map(([n, on]) => (
          <div key={n} className="flex h-full items-center">
            <IconButton name={n} width="w-9" size="size-[26px]" />
            <span className="flex w-[26px] justify-center">
              <Caret className={on ? "text-white" : "text-[#8c8c8c]"} />
            </span>
          </div>
        ))}
        <IconButton name="light" width="w-10" size="size-[30px]" />
        <IconButton name="list" width="w-[54px]" />
        <IconButton name="gearWhite" width="w-9" size="size-[26px]" />
        <span className="flex w-[26px] justify-center">
          <Caret className="text-white" />
        </span>
        <IconButton name="person" width="w-[38px]" size="size-[30px]" />
      </div>
      <h1 className="ml-auto mr-[318px] self-center text-[17px] font-normal leading-6 text-[#d8d8d8]">零件1 *</h1>
    </header>
  );
}

/* ---------- tool rows ---------- */

const TOOLS_A = ["abc", "tape", "scale", "planeArrows", "dial", "lightTimer", "boxTick", "boxCheck", "sigma", "turbine", "cones", "squeeze", "docCompare", "decision"];
const TOOLS_B = ["gearArrow", "sheets", "roundCheck", "drive", "fan"];
const TOOLS_C = [
  ["screw", "angle"],
  ["monitorSmall", "nodes", "globe"],
  ["gearWhite", "gearRough", "pulley", "greenGear", "spring", "valve"],
  ["lens", "binocular"],
  ["excel", "printerGray", "annotate"],
  ["helpBook"],
];

function ToolRows() {
  return (
    <>
      <div className="flex h-[43px]">
        <div className="flex w-[217px] items-center border-r border-[#8c8c8c]">
          <GripV />
          <div className="ml-2 flex h-full">
            {["play", "stop", "pause", "macroNew", "macroEdit"].map((n) => (
              <IconButton key={n} name={n} width="w-[39px]" size={n === "play" || n === "stop" ? "size-6" : "size-[29px]"} />
            ))}
          </div>
        </div>
      </div>
      <div className="flex h-[46px] border-b border-[#c0c0c0]">
        <div className="flex border-r border-t border-[#8c8c8c]">
          <GripV />
          <div className="ml-2 flex">
            {TOOLS_A.map((n) => (
              <IconButton key={n} name={n} width="w-[39px]" size="size-[29px]" />
            ))}
          </div>
          <span className="flex w-[30px] items-center justify-center">
            <Caret className="text-white" />
          </span>
          <IconButton name="tableX" width="w-8" size="size-[29px]" />
          <span className="my-1 ml-[2px] w-2 border-x border-[#b0b0b0]" />
          <div className="ml-[9px] flex w-[200px] border-r border-[#8c8c8c]">
            {TOOLS_B.map((n) => (
              <IconButton key={n} name={n} width="w-[38px]" />
            ))}
          </div>
          <GripV />
          <div className="ml-[10px] flex">
            {TOOLS_C.map((group, i) => (
              <div key={i} className="flex">
                {i > 0 && <span className="my-1 w-2 border-l border-[#a0a0a0]" />}
                {group.map((n) => (
                  <IconButton key={n} name={n} width="w-[38px]" size="size-[17px]" />
                ))}
              </div>
            ))}
          </div>
          <span className="w-2" />
        </div>
      </div>
    </>
  );
}

/* ---------- ribbon ---------- */

function Big({ icon, lines, width, drop, bright }) {
  return (
    <button type="button" className={`flex h-full shrink-0 flex-col items-center pt-[7px] ${width} ${bright ? "text-white" : "text-[#929292]"}`}>
      <Icon name={icon} className="size-7" />
      <span className={`mt-[3px] whitespace-nowrap text-center leading-[23px] ${bright ? "text-[16px]" : "text-[17px]"}`}>
        {lines.map((l) => (
          <span key={l} className="block">
            {l}
          </span>
        ))}
      </span>
      {drop && (
        <span className="mb-[10px] mt-auto">
          <Caret />
        </span>
      )}
    </button>
  );
}

function Stack({ items, width = "" }) {
  return (
    <div className={`flex flex-col ${width}`}>
      {items.map(([icon, label]) => (
        <button key={label} type="button" className="flex h-[38px] items-center whitespace-nowrap text-[17px] leading-6 text-[#929292]">
          <span className="mr-[3px] flex w-9 justify-center">
            <Icon name={icon} className="size-[27px]" />
          </span>
          {label}
        </button>
      ))}
    </div>
  );
}

function Group({ width, children }) {
  return (
    <div className={`relative flex shrink-0 ${width}`}>
      {children}
      <span className="absolute bottom-[3px] right-0 top-[2px] border-r border-[#8a8a8a]" />
    </div>
  );
}

function Ribbon() {
  return (
    <div className="flex h-[117px]">
      <Group width="w-[269px] pl-[5px]">
        <Big icon="extrude" lines={["拉伸", "凸台/", "基体"]} width="w-13" />
        <Big icon="revolve" lines={["旋转", "凸台/", "基体"]} width="w-13" />
        <Stack items={[["sweep", "扫描"], ["loft", "放样凸台/基体"], ["boundary", "边界凸台/基体"]]} />
      </Group>
      <Group width="w-[270px]">
        <Big icon="cut" lines={["拉伸", "切除"]} width="w-12" />
        <Big icon="hole" lines={["异型孔", "向导"]} width="w-14" drop />
        <Big icon="revCut" lines={["旋转", "切除"]} width="w-12" />
        <Stack items={[["sweepCut", "扫描切除"], ["loftCut", "放样切除"], ["boundary", "边界切除"]]} />
      </Group>
      <Group width="w-[259px]">
        <Big icon="fillet" lines={["圆角"]} width="w-[45px]" drop />
        <Big icon="pattern" lines={["线性", "阵列"]} width="w-[45px]" drop />
        <Stack items={[["rib", "筋"], ["draft", "拔模"], ["shell", "抽壳"]]} width="w-[84px]" />
        <Stack items={[["wrap", "包覆"], ["intersect", "相交"], ["mirror", "镜向"]]} />
      </Group>
      <Group width="w-[91px]">
        <Big icon="refGeo" lines={["参考", "几..."]} width="w-[45px]" drop />
        <Big icon="curve" lines={["曲线"]} width="w-[45px]" drop />
      </Group>
      <Group width="w-[87px]">
        <Big icon="instant" lines={["Instant3D"]} width="w-full" bright />
      </Group>
      <Big icon="macroEdit" lines={["编辑", "宏"]} width="w-12" />
    </div>
  );
}

const TABS = [
  ["特征", "w-[56px]"],
  ["草图", "w-[56px]"],
  ["钣金", "w-[56px]"],
  ["焊件", "w-[56px]"],
  ["网格建模", "w-[96px]"],
  ["直接编辑", "w-[96px]"],
  ["标注", "w-[56px]"],
  ["评估", "w-[56px]"],
  ["MBD Dimensions", "w-[160px]"],
  ["SOLIDWORKS 插件", "w-[176px]"],
  ["MBD", "w-[57px]"],
  ["SOLIDWORKS CAM", "w-[181px]"],
  ["SOLIDWORKS CAM TBM", "w-[220px]"],
  ["大工程师", "w-[96px]"],
  ["KYTool", "w-[73px]"],
];

function TabRow() {
  return (
    <div className="flex h-[34px] border-t border-[#8a8a8a] bg-[#c4c9d3]">
      <div role="tablist" className="flex border-b border-[#8a8a8a]">
        {TABS.map(([t, w], i) => (
          <button
            key={t}
            type="button"
            role="tab"
            aria-selected={i === 0}
            className={`shrink-0 whitespace-nowrap border-r border-[#8a8a8a] text-center leading-8 text-white ${w} ${
              i === 0 ? "bg-[#4a4a4a]" : i === 9 ? "bg-[#575757]" : "bg-[#303030]"
            } ${/[A-Z]/.test(t) ? "text-[17px]" : "text-[19px]"}`}
          >
            {t}
          </button>
        ))}
      </div>
      <div className="relative z-10 ml-auto mr-[494px] flex h-[42px] items-center">
        {[
          ["zoomFit"],
          ["zoomArea"],
          ["prevView"],
          ["section"],
          ["orient", 1],
          ["display", 1],
          ["eye", 1],
          ["sphereEdit"],
          ["scene", 1],
          ["screen", 1],
        ].map(([n, drop]) => (
          <div key={n} className="flex h-full items-center">
            <IconButton name={n} width="w-[38px]" />
            {drop && (
              <span className="flex w-[15px] justify-center">
                <Caret className="text-[#7f8489]" />
              </span>
            )}
          </div>
        ))}
      </div>
    </div>
  );
}

/* ---------- left tool strip ---------- */

const STRIP_TOP = [
  ["extrude", 1], ["cut", 1], "-",
  ["fillet", 1], ["rib"], ["shell"], ["draft"], ["hole"], "-",
  ["pattern", 1], "-",
  ["refGeo", 1], ["curve", 1], "-",
  ["instant"], "=",
  ["uClamp"], ["bendBox"], ["column"], "-",
  ["flangeL"], ["corner"], ["sandwich"], ["zBend"], ["steps"], ["crossPlane"], ["curlPlate", 1], ["hammer"], "-",
  ["cut"], ["plainHole"], ["fourGrid"], "-",
  ["unfold"], ["refold"], ["flat"], ["noBend"], "-",
  ["plates"], ["openBox"], "-",
];

const STRIP_TABLES = ["tableBig", "tableHole", "tableBom", "tableBomX", "tableRev", "tableX", "tableWeld", "tableBend", "tableSheet", "tablePunch", "tableTitle"];

function Strip() {
  return (
    <aside className="flex w-[66px] shrink-0 flex-col">
      <span className="ml-[3px] mt-[2px] block h-[10px] w-[62px] border-t-2 border-dotted border-[#dcdcdc]" />
      {STRIP_TOP.map((it, i) =>
        it === "-" ? (
          <span key={i} className="ml-[3px] block h-2 w-[62px] border-t border-[#a0a0a0]" />
        ) : it === "=" ? (
          <span key={i} className="flex h-[22px] flex-col pt-2">
            <span className="mb-1 block w-[65px] border-t border-[#909090]" />
            <span className="ml-[3px] block w-[62px] border-t-2 border-dotted border-[#dcdcdc]" />
          </span>
        ) : (
          <button key={i} type="button" aria-label={it[0]} className="flex h-[38px] items-center pl-2">
            <Icon name={it[0]} className="size-7" />
            {it[1] && (
              <span className="ml-[17px]">
                <Caret />
              </span>
            )}
          </button>
        ),
      )}
      <span className="mt-2 block w-[65px] border-t border-[#909090]" />
      <div className="w-[46px] border-b border-r border-[#909090] pb-[7px] pt-[3px]">
        <span className="ml-[3px] block h-[11px] w-[39px] border-t-2 border-dotted border-[#dcdcdc]" />
        {STRIP_TABLES.map((n) => (
          <button key={n} type="button" aria-label={n} className="flex h-[38px] items-center pl-2">
            <Icon name={n} className="size-7" />
          </button>
        ))}
      </div>
    </aside>
  );
}

/* ---------- property manager ---------- */

function Chevron() {
  return (
    <svg viewBox="0 0 18 12" className="h-3 w-[18px]" aria-hidden="true">
      <path d="M1 10.500L9 2.500L17 10.500" fill="none" stroke="#fff" strokeWidth="3.400" />
    </svg>
  );
}

function Section({ title, children, className = "", lead }) {
  return (
    <section className={`ml-[6px] mr-[6px] border-t border-[#a4a4a4] pl-1 ${className}`}>
      <div className="flex h-[35px] items-center">
        {lead}
        <h3 className="text-[18px] font-medium leading-6 text-[#f4f4f4]">{title}</h3>
        <button type="button" aria-label={`折叠${title}`} className="ml-auto mr-[5px]">
          <Chevron />
        </button>
      </div>
      {children}
    </section>
  );
}

function Drop({ label, value, latin }) {
  return (
    <div className="relative ml-[45px] h-7 w-[201px]">
      <select
        aria-label={label}
        defaultValue={value}
        className={`h-7 w-full appearance-none border border-[#8a8a8a] bg-white pl-[3px] leading-6 text-[#1a1a1a] ${latin ? "text-[15px]" : "text-[17px]"}`}
      >
        <option>{value}</option>
      </select>
      <svg viewBox="0 0 12 8" className="pointer-events-none absolute right-[7px] top-[10px] h-2 w-3" aria-hidden="true">
        <path d="M1 1L6 6.500L11 1" fill="none" stroke="#4a4a4a" strokeWidth="2.400" />
      </svg>
    </div>
  );
}

function Spin({ icon, label, value, last }) {
  return (
    <div className={`flex items-center ${last ? "" : "mb-3"}`}>
      <Icon name={icon} className="ml-[3px] mr-[13px] size-[29px]" />
      <div className="flex h-8 w-[201px] border border-[#a0a0a0] bg-white">
        <input aria-label={label} defaultValue={value} className="min-w-0 flex-1 bg-white pb-[2px] pl-1 text-[15px] text-[#444]" />
        <div className="flex w-6 flex-col gap-px bg-[#888] pl-px">
          <button type="button" aria-label={`${label} 增大`} className="flex flex-1 items-center justify-center bg-[#f0f0f0]">
            <svg viewBox="0 0 8 4" className="h-1 w-2" aria-hidden="true"><path d="M0 4H8L4 0Z" /></svg>
          </button>
          <button type="button" aria-label={`${label} 减小`} className="flex flex-1 items-center justify-center bg-[#f0f0f0]">
            <svg viewBox="0 0 8 4" className="h-1 w-2" aria-hidden="true"><path d="M0 0H8L4 4Z" /></svg>
          </button>
        </div>
      </div>
    </div>
  );
}

function Panel() {
  return (
    <aside className="relative flex w-[291px] shrink-0 flex-col border-r border-[#8a8a8a]">
      <div className="mx-px mt-1 flex h-[26px] justify-center border-y border-[#8a8a8a] pt-[7px]">
        <span className="size-3 rounded-full bg-[#e8e8e8] shadow-[inset_-1px_-1px_2px_#999]" />
      </div>
      <div className="ml-[3px] mr-[2px] mt-1 flex h-[38px] overflow-hidden border-t border-[#8a8a8a]">
        {["part", "propList", "configs", "target", "ball"].map((n, i) => (
          <button
            key={n}
            type="button"
            aria-label={n}
            className={`flex w-[52px] shrink-0 items-center justify-center border-r border-[#8a8a8a] ${i === 1 ? "bg-[#4a4a4a]" : "border-b bg-[#303030]"}`}
          >
            <Icon name={n} className="size-7" />
          </button>
        ))}
        <span className="flex w-[26px] justify-center border-b border-[#8a8a8a] bg-[#303030] pl-2 pt-[2px]">
          <Icon name="camTab" className="size-6" />
        </span>
      </div>
      <div className="absolute right-px top-[47px] flex gap-[2px]">
        {["M8 2L2 7l6 5", "M2 2l6 5-6 5"].map((d, i) => (
          <button key={d} type="button" aria-label={i ? "向右" : "向左"} className="flex h-6 w-[22px] items-center justify-center bg-[#f0f0f0]">
            <svg viewBox="0 0 10 14" className="h-3 w-[9px]" aria-hidden="true">
              <path d={d} fill="none" stroke="#222" strokeWidth="1.800" />
            </svg>
          </button>
        ))}
      </div>
      <div className="flex h-11 items-center">
        <Icon name="stud" className="ml-[10px] size-8" />
        <h2 className="ml-[6px] text-[20px] font-medium leading-7 text-[#f4f4f4]">螺柱向导</h2>
        <button type="button" aria-label="帮助" className="ml-auto mr-[14px] flex size-[26px] items-center justify-center rounded-full bg-[#f4f4f4] text-[22px] font-bold leading-6 text-[#2e7d9e]">
          ?
        </button>
      </div>
      <div className="flex h-[34px] items-center">
        <button type="button" aria-label="确定" className="ml-[9px]">
          <svg viewBox="0 0 26 20" className="h-5 w-[26px]" aria-hidden="true">
            <path d="M2 11l7 7L24 2" fill="none" stroke="#b5cfae" strokeWidth="5.500" />
            <path d="M2 11l7 6L24 2" fill="none" stroke="#3f9d1c" strokeWidth="4" />
          </svg>
        </button>
        <button type="button" aria-label="取消" className="ml-[15px]">
          <svg viewBox="0 0 20 20" className="size-5" aria-hidden="true">
            <path d="M2 2l16 16M18 2L2 18" stroke="#e0b4aa" strokeWidth="6" />
            <path d="M2 2l16 16M18 2L2 18" stroke="#dc3a12" strokeWidth="4.400" />
          </svg>
        </button>
      </div>
      <div className="mb-[9px] ml-[91px] mt-[7px] flex gap-[17px]">
        <button type="button" aria-label="轴端螺柱" className="flex size-[46px] items-center justify-center border border-black bg-[#303030]">
          <Icon name="studShaft" className="size-[38px]" />
        </button>
        <button type="button" aria-label="曲面螺柱" className="flex size-[46px] items-center justify-center border border-[#2c2c2c]">
          <Icon name="studPlate" className="size-[38px]" />
        </button>
      </div>

      <div className="relative">
        <Section title="边线" className="pb-[11px]">
          <div className="ml-[45px] h-[33px] w-[190px] border-[3px] border-[#6cb0e6] bg-[#d3e5f6] pb-1">
            <input aria-label="边线" defaultValue="边线<1>" className="block h-full w-full bg-[#0078d7] text-[17px] leading-6 text-white" />
          </div>
        </Section>
        <Section title="标准" className="pb-[11px]">
          <Drop label="标准" value="GB" latin />
          <div className="ml-[50px] h-9 pt-1 text-[17px] leading-8 text-[#e4e4e4]">类型:</div>
          <Drop label="类型" value="机械螺纹" />
          <div className="ml-[50px] h-[37px] pt-[6px] text-[17px] leading-8 text-[#e4e4e4]">大小:</div>
          <Drop label="大小" value="M14" latin />
          <div className="mt-3 flex items-center">
            <Icon name="diameter" className="ml-[3px] mr-[13px] size-[29px]" />
            <input aria-label="直径" disabled defaultValue="14.00mm" className="h-8 w-[201px] border border-[#b4b4b4] bg-[#c0c0c0] pb-[2px] pl-1 text-[15px] text-[#828282]" />
          </div>
        </Section>
        <Section title="螺纹线" className="pb-1">
          <Drop label="螺纹线" value="成形到下一面" />
          <label className="flex h-[38px] items-center text-[17px] leading-6 text-[#e4e4e4]">
            <input type="checkbox" className="mr-[2px] size-5 appearance-none border border-[#888] bg-white" />
            螺纹线等级
          </label>
        </Section>
        <Section
          title="根切"
          lead={
            <span className="relative mr-[6px] flex size-[19px]">
              <input type="checkbox" defaultChecked aria-label="根切" className="size-[19px] appearance-none border border-[#888] bg-white" />
              <svg viewBox="0 0 14 12" className="pointer-events-none absolute left-[3px] top-1 h-3 w-[14px]" aria-hidden="true">
                <path d="M1 6l4 4 7-9" fill="none" stroke="#222" strokeWidth="2.600" />
              </svg>
            </span>
          }
        >
          <Spin icon="diameter" label="根切直径" value="11.00mm" />
          <Spin icon="depth" label="根切深度" value="3.40mm" />
          <Spin icon="radius" label="根切半径" value="1.00mm" last />
        </Section>
        <button type="button" className="ml-[31px] mt-[13px] block h-9 w-[185px] border border-[#ddd] bg-[#f3f3f3] text-[17px] leading-8 text-[#9a9a9a]">
          恢复默认值
        </button>
        <svg viewBox="0 0 304 606" className="pointer-events-none absolute -left-[6px] top-2 z-20 h-[606px] w-[304px] drop-shadow-[2px_2px_2px_rgba(0,0,0,0.4)]" aria-hidden="true">
          <rect x="2" y="2" width="299" height="602" fill="none" stroke="#ea1212" strokeWidth="4" strokeDasharray="9 4" />
        </svg>
      </div>

      <div className="mx-px mb-[1px] mt-auto h-1 border-y border-[#8a8a8a]" />
    </aside>
  );
}

/* ---------- graphics area ---------- */

const K = 0.348;
const RINGS = [
  [0, 182], [26, 154], [76, 154], [88, 157], [150, 196],
];

function Model() {
  return (
    <svg viewBox="357 295 2281 1741" className="block w-full" role="img" aria-label="阶梯轴模型">
      <defs>
        <linearGradient id="steel" x1="0" y1="-279" x2="0" y2="279" gradientUnits="userSpaceOnUse">
          <stop offset="0" stopColor="#8d8f98" />
          <stop offset=".07" stopColor="#939a9f" />
          <stop offset=".16" stopColor="#9aa1a7" />
          <stop offset=".25" stopColor="#a6acb4" />
          <stop offset=".33" stopColor="#8a9098" />
          <stop offset=".42" stopColor="#767c80" />
          <stop offset=".5" stopColor="#6b6e74" />
          <stop offset=".57" stopColor="#616466" />
          <stop offset=".63" stopColor="#4f5354" />
          <stop offset=".69" stopColor="#3a3b3d" />
          <stop offset=".77" stopColor="#2b2c2c" />
          <stop offset=".88" stopColor="#323237" />
          <stop offset="1" stopColor="#38353f" />
        </linearGradient>
        <linearGradient id="olive" x1="0" y1="-225" x2="0" y2="225" gradientUnits="userSpaceOnUse">
          <stop offset="0" stopColor="#c3c488" />
          <stop offset=".12" stopColor="#c8cb90" />
          <stop offset=".25" stopColor="#d1d5a8" />
          <stop offset=".34" stopColor="#b4b885" />
          <stop offset=".42" stopColor="#a0a473" />
          <stop offset=".52" stopColor="#8d916b" />
          <stop offset=".6" stopColor="#7a7d5d" />
          <stop offset=".68" stopColor="#525339" />
          <stop offset=".75" stopColor="#3b3b2b" />
          <stop offset=".87" stopColor="#43402f" />
          <stop offset="1" stopColor="#4b4436" />
        </linearGradient>
        <linearGradient id="ringFade" x1="0" y1="-200" x2="0" y2="200" gradientUnits="userSpaceOnUse">
          <stop offset="0" stopColor="#fbff3c" />
          <stop offset=".5" stopColor="#e6ea28" />
          <stop offset="1" stopColor="#a3a81c" />
        </linearGradient>
        <filter id="soft" x="-5%" y="-20%" width="110%" height="150%">
          <feDropShadow dx="2" dy="3" stdDeviation="2" floodOpacity=".5" />
        </filter>
      </defs>
      <rect x="356" y="295" width="2282" height="1741" fill="#c4c9d3" />

      <g transform="translate(1807 1177) rotate(-10.590)">
        <path d={`M0 -279H-1310A${279 * K} 279 0 0 0 -1310 279H0Z`} fill="url(#steel)" stroke="#101010" strokeWidth="1.500" />
        <ellipse rx={279 * K} ry="279" fill="#3b3741" stroke="#080808" strokeWidth="1.500" />
        <path d={`M0 -224H524V224H0A${224 * K} 224 0 0 1 0 -224Z`} fill="url(#olive)" stroke="#101010" strokeWidth="1.500" />
        <path d="M-73 -74H450" stroke="#8b8c84" strokeWidth="1.500" />
        <path d="M-76 39H448" stroke="#6b6c67" strokeWidth="3" />
        <ellipse cx="524" rx={224 * K} ry="224" fill="#4f473b" />
        <ellipse cx="524" rx={165 * K} ry="165" fill="#3b3741" />
        <ellipse rx={224 * K} ry="224" fill="none" stroke="#ffff1e" strokeWidth="1.600" />
        {RINGS.map(([x, r]) => (
          <ellipse key={x} cx={x} rx={r * K} ry={r} fill="none" stroke="url(#ringFade)" strokeWidth="1.500" />
        ))}
        <ellipse cx="494" rx={196 * K} ry="196" fill="none" stroke="#ffff1e" strokeWidth="1.500" />
        <ellipse cx="524" rx={165 * K} ry="165" fill="none" stroke="#ffff1e" strokeWidth="1.500" />
        <ellipse cx="524" rx={224 * K} ry="224" fill="none" stroke="#e6f03c" strokeWidth="2" />
        <ellipse cx="524" rx={224 * K} ry="224" fill="none" stroke="#3fa6ff" strokeWidth="2.500" strokeDasharray="5 3" />
      </g>
      <path d="M2321 1075v11M2316 1080.500h10" stroke="#4aa8f5" strokeWidth="2" />

      <g stroke="#0000f0" strokeWidth="1.800" fill="#0000f0">
        <path d="M519 1411v12M513 1417h12M514 1412l10 10M524 1412l-10 10M519 1417l38-6M519 1417l5 8" />
        <path d="M551 1406l14 2-13 6zM520 1427l6-4 4 11z" stroke="none" />
      </g>

      <g strokeWidth="5">
        <path d="M418 1958l28-5" stroke="#005c00" />
        <path d="M444 1947l14 3-11 9z" fill="#005c00" />
        <path d="M418 1960l9 19" stroke="#c40000" />
        <path d="M422 1979l11-6 2 15z" fill="#c40000" />
        <path d="M417 1957l-3 24" stroke="#0000b8" />
        <path d="M407 1980l12 2-6 10z" fill="#0000b8" />
      </g>
      <g className="text-[11px] font-[family-name:'Liberation_Sans',sans-serif]">
        <text x="464" y="1949" fill="#3e9a55">Y</text>
        <text x="435" y="1993" fill="#ee5c5c">X</text>
        <text x="409" y="1998" fill="#5050d8">Z</text>
      </g>

      <g filter="url(#soft)">
        <path d="M366 675L2214 972" stroke="#f80c0c" strokeWidth="4" />
        <path d="M2234 976l-33 6 6-11-3-11z" fill="#f80c0c" />
      </g>
    </svg>
  );
}

function Viewport() {
  return (
    <main className="relative min-w-0 flex-1 self-start bg-[#c4c9d3]">
      <Model />
      <div className="absolute left-[10px] top-[6px] flex items-center">
        <svg viewBox="0 0 7 12" className="h-3 w-[7px]" aria-hidden="true">
          <path d="M0 0L7 6L0 12Z" fill="#1e2127" />
        </svg>
        <Icon name="partDark" className="ml-[18px] size-7" />
        <span className="ml-[5px] mt-2 text-[17px] leading-6 text-[#111]">零件1 (默认) ...</span>
      </div>
      <div className="absolute left-0 top-[824px] flex h-[58px] w-[13px] items-center justify-center bg-[#4a4a4a]">
        <span className="size-[11px] shrink-0 rounded-full bg-[#e8e8e8] shadow-[inset_-1px_-1px_2px_#999]" />
      </div>
      <div className="absolute bottom-[38px] right-[34px] bg-[#ece6e5] px-[3px] text-[33px] font-medium leading-[41px] text-black [text-shadow:0_0_2px_#19c419]">
        DODODH.COOM
      </div>
    </main>
  );
}

export default function App() {
  return (
    <div className={`flex min-h-screen flex-col bg-[#4a4a4a] ${UI}`}>
      <TitleBar />
      <ToolRows />
      <Ribbon />
      <TabRow />
      <div className="flex">
        <Strip />
        <Panel />
        <Viewport />
      </div>
    </div>
  );
}
